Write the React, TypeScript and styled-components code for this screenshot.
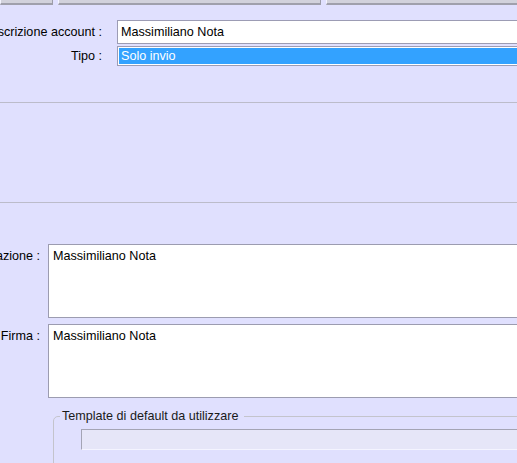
import React from "react";
import styled, { createGlobalStyle } from "styled-components";

const Global = createGlobalStyle`
  html, body {
    margin: 0;
    padding: 0;
    overflow: hidden;
    background: #e0e0fe;
  }
  body {
    font-family: "Liberation Sans", Arial, sans-serif;
    font-size: 12.6px;
    color: #000;
  }
`;

const Page = styled.div`
  width: 545px;
  display: flex;
  flex-direction: column;
`;

const TabBar = styled.div`
  display: flex;
  gap: 5px;
  height: 5px;
  overflow: hidden;
`;

const TabButton = styled.div<{ $w?: number }>`
  flex: ${(p) => (p.$w ? `0 0 ${p.$w}px` : "1 1 auto")};
  height: 5px;
  box-sizing: border-box;
  background: #d2d2dc;
  border-left: 1px solid #f4f4ff;
  border-right: 1px solid #9c9ca8;
  border-bottom: 2px solid #a0a0ac;
`;

const TopForm = styled.div`
  display: grid;
  grid-template-columns: 102px 1fr;
  column-gap: 15px;
  row-gap: 2px;
  padding-top: 15px;
  align-items: center;
`;

const Label = styled.div<{ $top?: boolean }>`
  display: flex;
  justify-content: flex-end;
  overflow: hidden;
  white-space: nowrap;
  align-self: ${(p) => (p.$top ? "start" : "center")};
  padding-top: ${(p) => (p.$top ? "5px" : "0")};
`;

const TextInput = styled.div`
  box-sizing: border-box;
  height: 24px;
  background: #fff;
  border: 1px solid #9c9cb4;
  padding: 0 3px;
  display: flex;
  align-items: center;
  white-space: nowrap;
`;

const SelectBox = styled.div`
  box-sizing: border-box;
  height: 20px;
  background: #33a2ff;
  color: #fff;
  border: 1px solid #9c9cb4;
  box-shadow: inset 0 0 0 1px #fff;
  padding: 0 3px;
  display: flex;
  align-items: center;
  white-space: nowrap;
`;

const Separator = styled.div<{ $mt: number }>`
  margin-top: ${(p) => p.$mt}px;
  height: 1px;
  background: #bcbcca;
`;

const BottomForm = styled.div`
  display: grid;
  grid-template-columns: 40px 1fr;
  column-gap: 8px;
  row-gap: 6px;
  margin-top: 41px;
`;

const TextArea = styled.div`
  box-sizing: border-box;
  height: 74px;
  background: #fff;
  border: 1px solid #9c9cb0;
  padding: 4px 4px;
  line-height: 15px;
  white-space: nowrap;
`;

const Group = styled.fieldset`
  margin: 11px 0 0 53px;
  padding: 0 0 20px 6px;
  border: 1px solid #c4c4cc;
  border-radius: 5px;
  min-width: 0;
`;

const Legend = styled.legend`
  padding: 0 6px 0 2px;
  line-height: 15px;
  color: #1a1a1a;
`;

const DisabledInput = styled.div`
  box-sizing: border-box;
  margin: 5px 0 0 21px;
  height: 21px;
  background: #e6e6f8;
  border-top: 1px solid #a4a4b4;
  border-left: 1px solid #a4a4b4;
  border-bottom: 1px solid #f4f4ff;
  border-right: 1px solid #f4f4ff;
`;

export default function App() {
  return (
    <>
      <Global />
      <Page>
        <TabBar>
          <TabButton $w={53} />
          <TabButton $w={263} />
          <TabButton />
        </TabBar>
        <TopForm>
          <Label>
            <span>Descrizione account :</span>
          </Label>
          <TextInput>Massimiliano Nota</TextInput>
          <Label>
            <span>Tipo :</span>
          </Label>
          <SelectBox>Solo invio</SelectBox>
        </TopForm>
        <Separator $mt={36} />
        <Separator $mt={99} />
        <BottomForm>
          <Label $top>
            <span>Intestazione :</span>
          </Label>
          <TextArea>Massimiliano Nota</TextArea>
          <Label $top>
            <span>Firma :</span>
          </Label>
          <TextArea>Massimiliano Nota</TextArea>
        </BottomForm>
        <Group>
          <Legend>Template di default da utilizzare</Legend>
          <DisabledInput />
        </Group>
      </Page>
    </>
  );
}
